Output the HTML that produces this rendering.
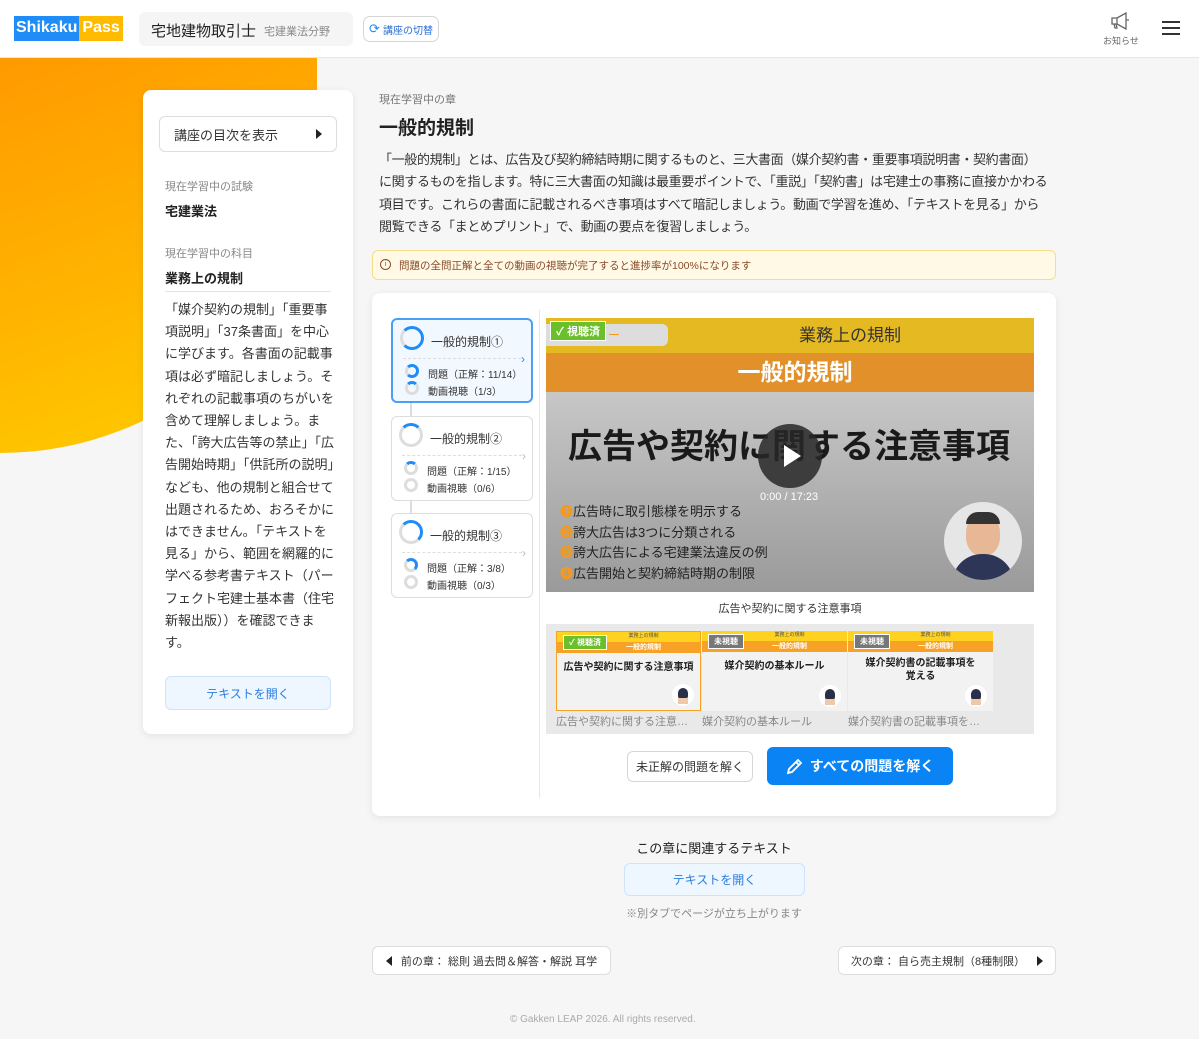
<!DOCTYPE html>
<html><head><meta charset="utf-8"><style>
*{box-sizing:border-box;margin:0;padding:0}
body{width:1199px;height:1039px;background:#f6f6f6;font-family:"Liberation Sans","Noto Sans CJK JP",sans-serif;color:#222;position:relative;overflow:hidden}
.a{position:absolute}
.hdr{left:0;top:0;width:1199px;height:58px;background:#fff;border-bottom:1px solid #e6e6e6}
.orange{left:0;top:58px;width:317px;height:395px;background:linear-gradient(160deg,#ff9a00 0%,#ffb300 50%,#ffcf00 100%);border-bottom-right-radius:317px 300px}
.card{background:#fff;border-radius:8px;box-shadow:0 2px 8px rgba(0,0,0,.08)}
.btn{background:#fff;border:1px solid #d6d6d6;border-radius:6px;display:flex;align-items:center;justify-content:center}
.tri-r{width:0;height:0;border-top:5px solid transparent;border-bottom:5px solid transparent;border-left:6px solid #222}
.tri-l{width:0;height:0;border-top:5px solid transparent;border-bottom:5px solid transparent;border-right:6px solid #222}
.ch{left:391px;width:142px;height:85px;border:1px solid #ddd;border-radius:6px;background:#fff}
.ch .t{position:absolute;left:38px;top:13px;font-size:12px;color:#333}
.ch .l{position:absolute;left:10px;right:10px;top:38px;border-top:1px dashed #ddd}
.ch .r{position:absolute;left:35px;font-size:10px;color:#333}
.ring{position:absolute;border-radius:50%;border:3px solid #ddd}
.thumb{top:631px;width:145px;height:80px;background:#f2f2f2;overflow:hidden}
.thumb .y{height:10px;background:#ffd21f;font-size:5px;text-align:center;color:#555;padding-left:30px}
.thumb .o{height:11px;background:#f7a127;font-size:7px;font-weight:bold;color:#fff;text-align:center;padding-left:30px}
.thumb .tt{font-size:10px;font-weight:bold;text-align:center;margin-top:8px;line-height:13px}
.tag{position:absolute;left:6px;top:3px;font-size:8px;font-weight:bold;color:#fff;padding:1px 5px;border:1px solid #fff}
.face{position:absolute;right:6px;bottom:4px;width:22px;height:22px;border-radius:50%;background:#fff}
.face:after{content:"";position:absolute;left:6px;top:4px;width:10px;height:16px;background:#2a2f4a;border-radius:5px 5px 2px 2px;box-shadow:inset 0 -6px 0 #f2c9a8}
.nw{white-space:nowrap}
</style></head><body>
<div class="a hdr"></div>
<div class="a" style="left:14px;top:16px;height:25px;display:flex;font-weight:bold;font-size:16px;color:#fff">
<div style="background:#1f8cf7;padding:3px 2px 0 2px">Shikaku</div><div style="background:#ffbb00;padding:3px 3px 0 3px">Pass</div></div>
<div class="a" style="left:139px;top:12px;width:214px;height:34px;background:#f5f5f5;border-radius:6px"></div>
<div class="a" style="left:151px;top:20px;font-size:15px;color:#222">宅地建物取引士</div>
<div class="a" style="left:264px;top:23px;font-size:11px;color:#888">宅建業法分野</div>
<div class="a btn" style="left:363px;top:16px;width:76px;height:26px;font-size:10px;color:#2a6fd6;border-radius:7px"><span style="color:#1f8cf7;font-size:13px;margin-right:3px">⟳</span>講座の切替</div>
<svg class="a" style="left:1110px;top:11px" width="22" height="20" viewBox="0 0 22 20" fill="none" stroke="#666" stroke-width="1.3"><path d="M2 7h5v6H2zM7 7l9-5v16l-9-5M16 9h3M4 13l1 4h2l-1-4"/></svg>
<div class="a" style="left:1103px;top:34px;font-size:9px;color:#666">お知らせ</div>
<div class="a" style="left:1162px;top:21px;width:18px;height:2px;background:#333;box-shadow:0 6px 0 #333,0 12px 0 #333"></div>

<div class="a orange"></div>

<div class="a card" style="left:143px;top:90px;width:210px;height:644px"></div>
<div class="a btn" style="left:159px;top:116px;width:178px;height:36px;justify-content:space-between;padding:0 14px;font-size:13px;color:#333;border-color:#ddd">講座の目次を表示<div class="tri-r"></div></div>
<div class="a" style="left:165px;top:178px;font-size:11px;color:#888">現在学習中の試験</div>
<div class="a" style="left:165px;top:201px;font-size:13px;font-weight:bold">宅建業法</div>
<div class="a" style="left:165px;top:245px;font-size:11px;color:#888">現在学習中の科目</div>
<div class="a" style="left:165px;top:268px;font-size:13px;font-weight:bold">業務上の規制</div>
<div class="a" style="left:165px;top:291px;width:166px;border-top:1px solid #e2e2e2"></div>
<div class="a nw" style="left:165px;top:299px;font-size:13px;line-height:22.2px;color:#333">「媒介契約の規制」「重要事<br>項説明」「37条書面」を中心<br>に学びます。各書面の記載事<br>項は必ず暗記しましょう。そ<br>れぞれの記載事項のちがいを<br>含めて理解しましょう。ま<br>た、「誇大広告等の禁止」「広<br>告開始時期」「供託所の説明」<br>なども、他の規制と組合せて<br>出題されるため、おろそかに<br>はできません。「テキストを<br>見る」から、範囲を網羅的に<br>学べる参考書テキスト（パー<br>フェクト宅建士基本書（住宅<br>新報出版））を確認できま<br>す。</div>
<div class="a btn" style="left:165px;top:676px;width:166px;height:34px;background:#eef6ff;border-color:#cfe3fb;color:#2a7de1;font-size:12px">テキストを開く</div>

<div class="a" style="left:379px;top:91px;font-size:11px;color:#777">現在学習中の章</div>
<div class="a" style="left:379px;top:113px;font-size:19px;font-weight:bold">一般的規制</div>
<div class="a nw" style="left:379px;top:149px;font-size:13px;line-height:22.3px;color:#333;letter-spacing:-0.35px">「一般的規制」とは、広告及び契約締結時期に関するものと、三大書面（媒介契約書・重要事項説明書・契約書面）<br>に関するものを指します。特に三大書面の知識は最重要ポイントで、「重説」「契約書」は宅建士の事務に直接かかわる<br>項目です。これらの書面に記載されるべき事項はすべて暗記しましょう。動画で学習を進め、「テキストを見る」から<br>閲覧できる「まとめプリント」で、動画の要点を復習しましょう。</div>
<div class="a" style="left:372px;top:250px;width:684px;height:30px;background:#fff9e6;border:1px solid #f7dd8a;border-radius:6px;font-size:10.5px;color:#8a4b2a;padding:7px 0 0 26px">問題の全問正解と全ての動画の視聴が完了すると進捗率が100%になります</div>
<div class="a" style="left:380px;top:259px;width:11px;height:11px;border:1px solid #8a4b2a;border-radius:50%;font-size:7px;color:#8a4b2a;text-align:center;line-height:9px">i</div>

<div class="a card" style="left:372px;top:293px;width:684px;height:523px"></div>
<div class="a" style="left:539px;top:310px;height:488px;border-left:1px solid #e6e6e6"></div>
<div class="a" style="left:410px;top:403px;width:2px;height:110px;background:#ddd"></div>

<div class="a ch" style="top:318px;border:2px solid #4aa0f5;background:#f2f8ff"><div class="ring" style="left:7px;top:6px;width:24px;height:24px;border-color:#1f8cf7 #1f8cf7 #1f8cf7 #ddd"></div><div class="t">一般的規制①</div><div class="l"></div><div class="ring" style="left:12px;top:44px;width:14px;height:14px;border-color:#1f8cf7 #1f8cf7 #1f8cf7 #ddd"></div><div class="r" style="top:46px">問題（正解：11/14）</div><div class="ring" style="left:12px;top:61px;width:14px;height:14px;border-color:#1f8cf7 #ddd #ddd #ddd"></div><div class="r" style="top:63px">動画視聴（1/3）</div><div style="position:absolute;right:6px;top:32px;color:#1f8cf7;font-size:12px">›</div></div>
<div class="a ch" style="top:416px"><div class="ring" style="left:7px;top:6px;width:24px;height:24px;border-top-color:#1f8cf7"></div><div class="t">一般的規制②</div><div class="l"></div><div class="ring" style="left:12px;top:44px;width:14px;height:14px;border-top-color:#1f8cf7"></div><div class="r" style="top:46px">問題（正解：1/15）</div><div class="ring" style="left:12px;top:61px;width:14px;height:14px"></div><div class="r" style="top:63px">動画視聴（0/6）</div><div style="position:absolute;right:6px;top:32px;color:#bbb;font-size:12px">›</div></div>
<div class="a ch" style="top:513px"><div class="ring" style="left:7px;top:6px;width:24px;height:24px;border-color:#1f8cf7 #1f8cf7 #ddd #ddd"></div><div class="t">一般的規制③</div><div class="l"></div><div class="ring" style="left:12px;top:44px;width:14px;height:14px;border-color:#1f8cf7 #1f8cf7 #ddd #ddd"></div><div class="r" style="top:46px">問題（正解：3/8）</div><div class="ring" style="left:12px;top:61px;width:14px;height:14px"></div><div class="r" style="top:63px">動画視聴（0/3）</div><div style="position:absolute;right:6px;top:32px;color:#bbb;font-size:12px">›</div></div>

<div class="a" style="left:546px;top:318px;width:488px;height:274px;background:linear-gradient(#d8d8d8,#9a9a9a);overflow:hidden">
<div style="height:35px;background:#e4b922;text-align:center;font-size:17px;color:#333;line-height:35px;padding-left:120px">業務上の規制</div>
<div style="height:39px;background:#e2912a;text-align:center;font-size:23px;font-weight:bold;color:#fff;line-height:39px;padding-left:10px">一般的規制</div>
<div style="position:absolute;left:0;top:6px;width:122px;height:22px;background:#ddd;border-radius:0 6px 6px 0;color:#f29a1f;font-size:12px;padding-left:50px;line-height:22px">ャー</div>
<div style="position:absolute;left:4px;top:3px;background:#6bbf2a;color:#fff;font-size:11px;font-weight:bold;padding:1px 5px;border:1px solid #fff">✓ 視聴済</div>
<div style="position:absolute;left:22px;top:101px;font-size:34px;font-weight:bold;color:#1a1a1a;white-space:nowrap">広告や契約に関する注意事項</div>
<div style="position:absolute;left:14px;top:184px;font-size:13px;line-height:20.5px;color:#222"><span style="color:#f29a1f">❶</span>広告時に取引態様を明示する<br><span style="color:#f29a1f">❷</span>誇大広告は3つに分類される<br><span style="color:#f29a1f">❸</span>誇大広告による宅建業法違反の例<br><span style="color:#f29a1f">❹</span>広告開始と契約締結時期の制限</div>
<div style="position:absolute;left:398px;top:184px;width:78px;height:78px;border-radius:50%;background:#e6e6e6;overflow:hidden"><div style="position:absolute;left:22px;top:12px;width:34px;height:42px;background:#e8b896;border-radius:45%"></div><div style="position:absolute;left:22px;top:10px;width:34px;height:12px;background:#333;border-radius:14px 14px 0 0"></div><div style="position:absolute;left:8px;top:52px;width:62px;height:40px;background:#2d3656;border-radius:30px 30px 0 0"></div></div>
<div style="position:absolute;left:212px;top:106px;width:64px;height:64px;border-radius:50%;background:rgba(40,40,40,.85)"><div style="position:absolute;left:26px;top:21px;border-top:11px solid transparent;border-bottom:11px solid transparent;border-left:17px solid #fff"></div></div>
<div style="position:absolute;left:214px;top:173px;font-size:11px;color:#fff">0:00 / 17:23</div>
</div>
<div class="a" style="left:546px;top:600px;width:488px;text-align:center;font-size:11px;color:#333">広告や契約に関する注意事項</div>

<div class="a" style="left:546px;top:624px;width:488px;height:110px;background:#e9e9e9"></div>
<div class="a thumb" style="left:556px;border:1px solid #f7a127"><div class="y">業務上の規制</div><div class="o">一般的規制</div><div class="tt">広告や契約に関する注意事項</div><div class="tag" style="background:#6bbf2a">✓ 視聴済</div><div class="face"></div></div>
<div class="a thumb" style="left:702px"><div class="y">業務上の規制</div><div class="o">一般的規制</div><div class="tt">媒介契約の基本ルール</div><div class="tag" style="background:#777">未視聴</div><div class="face"></div></div>
<div class="a thumb" style="left:848px"><div class="y">業務上の規制</div><div class="o">一般的規制</div><div class="tt" style="margin-top:5px">媒介契約書の記載事項を<br>覚える</div><div class="tag" style="background:#777">未視聴</div><div class="face"></div></div>
<div class="a" style="left:556px;top:713px;font-size:11px;color:#888">広告や契約に関する注意…</div>
<div class="a" style="left:702px;top:713px;font-size:11px;color:#888">媒介契約の基本ルール</div>
<div class="a" style="left:848px;top:713px;font-size:11px;color:#888">媒介契約書の記載事項を…</div>

<div class="a btn" style="left:627px;top:751px;width:126px;height:31px;font-size:12px;color:#333">未正解の問題を解く</div>
<div class="a" style="left:767px;top:747px;width:186px;height:38px;background:#0a84f5;border-radius:6px;color:#fff;font-weight:bold;font-size:14px;display:flex;align-items:center;justify-content:center"><svg width="18" height="18" viewBox="0 0 18 18" fill="none" stroke="#fff" stroke-width="1.8" style="margin-right:6px"><path d="M2 16l1-4L12 3l3 3-9 9zM10 5l3 3"/></svg>すべての問題を解く</div>

<div class="a" style="left:372px;top:838px;width:684px;text-align:center;font-size:13px;color:#222">この章に関連するテキスト</div>
<div class="a btn" style="left:624px;top:863px;width:181px;height:33px;background:#eef6ff;border-color:#cfe3fb;color:#2a7de1;font-size:12px">テキストを開く</div>
<div class="a" style="left:372px;top:905px;width:684px;text-align:center;font-size:11px;color:#888">※別タブでページが立ち上がります</div>
<div class="a btn" style="left:372px;top:946px;width:239px;height:29px;font-size:11px;color:#333;border-color:#ddd"><div class="tri-l" style="margin-right:9px"></div>前の章： 総則 過去問＆解答・解説 耳学</div>
<div class="a btn" style="left:838px;top:946px;width:218px;height:29px;font-size:11px;color:#333;border-color:#ddd">次の章： 自ら売主規制（8種制限）<div class="tri-r" style="margin-left:12px"></div></div>
<div class="a" style="left:510px;top:1014px;font-size:10px;color:#aaa">© Gakken LEAP 2026. All rights reserved.</div>
</body></html>
